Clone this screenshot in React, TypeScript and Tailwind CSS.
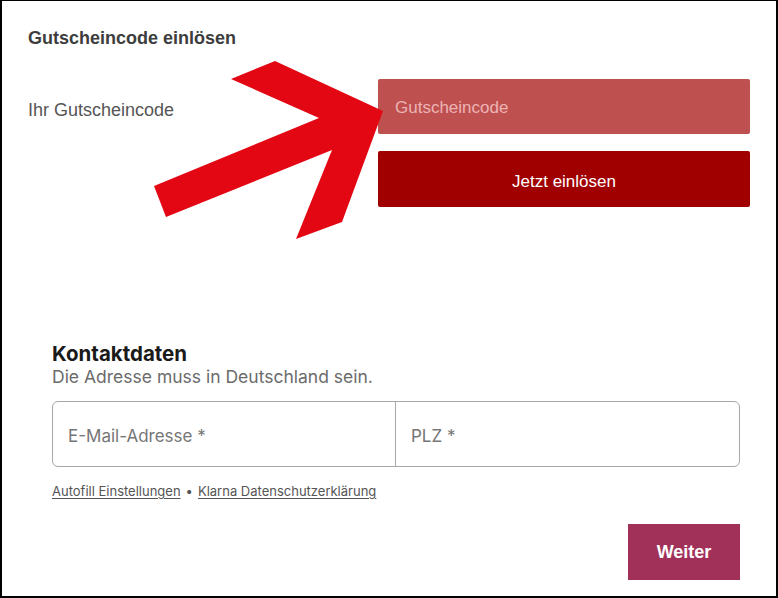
export default function App() {
  return (
    <div className="relative w-[778px] h-[598px] bg-white border-t border-l-2 border-r-2 border-b-2 border-black overflow-hidden">
      {/* Gutschein */}
      <section className="pl-[26px] pr-[26px] pt-[26px] font-['Liberation_Sans',Arial,sans-serif]">
        <h2 className="text-[18px] leading-[22px] font-bold text-[#3d3d3d]">Gutscheincode einlösen</h2>
        <div className="mt-[30px] flex">
          <label className="w-[350px] pt-[20px] text-[18px] leading-[22px] text-[#555]">Ihr Gutscheincode</label>
          <div className="flex flex-col gap-[17px] w-[372px]">
            <input
              className="h-[55px] rounded-[2px] bg-[#bf5050] px-[17px] pt-[3px] text-[17px] text-white placeholder:text-[#ecb4b4] outline-none"
              placeholder="Gutscheincode"
            />
            <button className="h-[56px] rounded-[2px] bg-[#a00000] pt-[6px] text-[17px] text-white">Jetzt einlösen</button>
          </div>
        </div>
      </section>

      {/* Kontaktdaten */}
      <section className="mt-[135px] ml-[50px] w-[688px] font-['Inter',sans-serif]">
        <h3 className="text-[20.5px] leading-[24px] font-bold text-[#1a1a1a]">Kontaktdaten</h3>
        <p className="text-[17.5px] leading-[22px] text-[#6b6b6b]">Die Adresse muss in Deutschland sein.</p>
        <div className="mt-[13px] flex h-[66px] rounded-[6px] border border-[#a8a8a8]">
          <input
            className="w-[343px] px-[15px] pt-[5px] text-[17px] text-[#333] placeholder:text-[#767676] outline-none border-r border-[#a8a8a8] bg-transparent"
            placeholder="E-Mail-Adresse *"
          />
          <input
            className="flex-1 px-[15px] pt-[5px] text-[17px] text-[#333] placeholder:text-[#767676] outline-none bg-transparent rounded-r-[6px]"
            placeholder="PLZ *"
          />
        </div>
        <div className="mt-[15px] text-[13px] leading-[18px] text-[#555] flex items-center gap-[5px]">
          <a className="underline underline-offset-2">Autofill Einstellungen</a>
          <span>•</span>
          <a className="underline underline-offset-2">Klarna Datenschutzerklärung</a>
        </div>
        <div className="mt-[24px] flex justify-end">
          <button className="w-[112px] h-[56px] bg-[#a2315a] text-white text-[18px] font-bold font-['Liberation_Sans',Arial,sans-serif]">
            Weiter
          </button>
        </div>
      </section>

      {/* red arrow overlay */}
      <svg className="absolute left-0 top-0 pointer-events-none" width="778" height="598" viewBox="0 0 778 598">
        <polygon
          points="381,110 340,221 294,238 330,149 164,216 152,185 317,117 229,78 273,60"
          fill="#e30613"
        />
      </svg>
    </div>
  );
}
